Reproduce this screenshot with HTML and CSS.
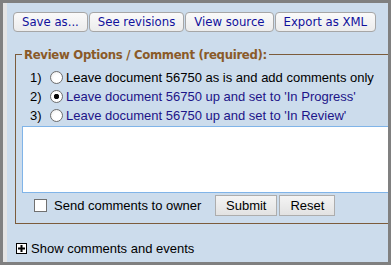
FILE: index.html
```html
<!DOCTYPE html>
<html>
<head>
<meta charset="utf-8">
<link rel="stylesheet" href="styles.css">
</head>
<body>
<div class="frame">
  <div class="panel">
    <div class="toolbar">
      <button class="tbtn">Save as...</button>
      <button class="tbtn">See revisions</button>
      <button class="tbtn">View source</button>
      <button class="tbtn">Export as XML</button>
    </div>
    <fieldset class="review">
      <legend class="legend">Review Options / Comment (required):</legend>
      <div class="options">
        <label class="opt"><span class="num">1)</span><input type="radio" name="st" class="radio"><span class="txt">Leave document 56750 as is and add comments only</span></label>
        <label class="opt blue"><span class="num">2)</span><input type="radio" name="st" class="radio" checked><span class="txt">Leave document 56750 up and set to 'In Progress'</span></label>
        <label class="opt blue"><span class="num">3)</span><input type="radio" name="st" class="radio"><span class="txt">Leave document 56750 up and set to 'In Review'</span></label>
      </div>
      <textarea class="comment"></textarea>
      <div class="actions">
        <label class="send"><input type="checkbox" class="check"><span>Send comments to owner</span></label>
        <button class="abtn">Submit</button>
        <button class="abtn">Reset</button>
      </div>
    </fieldset>
    <div class="show">
      <svg class="plus" width="11" height="11" viewBox="0 0 11 11"><rect x="0.5" y="0.5" width="10" height="10" fill="#fff" stroke="#000"/><rect x="2" y="4.5" width="7" height="2" fill="#000"/><rect x="4.5" y="2" width="2" height="7" fill="#000"/></svg>
      <span>Show comments and events</span>
    </div>
  </div>
</div>
</body>
</html>
```
FILE: styles.css
```css
html, body {
  margin: 0;
  padding: 0;
  overflow: hidden;
}
body {
  width: 391px;
  height: 265px;
  font-family: "Liberation Sans", Arial, sans-serif;
  font-size: 13px;
}
.frame {
  box-sizing: border-box;
  width: 391px;
  height: 265px;
  border: 3px solid #808080;
}
.panel {
  box-sizing: border-box;
  height: 100%;
  border-left: 4px solid #e4e4e4;
  background: #ccdcec;
  padding: 9px 0 0 6px;
  overflow: hidden;
}
.toolbar {
  display: flex;
  gap: 1px;
}
.tbtn {
  height: 20px;
  margin: 0;
  padding: 0 8px;
  font-family: "DejaVu Sans Condensed", "DejaVu Sans", sans-serif;
  font-stretch: condensed;
  font-size: 13px;
  color: #10109c;
  background: linear-gradient(#fafafa, #ececec);
  border: 1px solid #a6a6a6;
  border-radius: 4px;
  line-height: 18px;
}
.review {
  margin: 15px -30px 0 2px;
  padding: 0 0 7px 6px;
  border: 1px solid #7c5c3c;
  border-right: none;
}
.legend {
  font-family: "DejaVu Sans Condensed", "DejaVu Sans", sans-serif;
  font-stretch: condensed;
  font-weight: bold;
  font-size: 13px;
  letter-spacing: -0.3px;
  color: #8a5a28;
  padding: 0 2px;
  margin-left: 0;
  line-height: 15px;
}
.options {
  display: flex;
  flex-direction: column;
  padding: 6px 0 1px 8px;
}
.opt {
  display: flex;
  align-items: center;
  height: 19px;
  color: #000;
}
.opt.blue {
  color: #1c1488;
}
.num {
  color: #000;
  width: 12px;
}
.radio {
  appearance: none;
  -webkit-appearance: none;
  box-sizing: border-box;
  width: 13px;
  height: 13px;
  margin: 0 3px 0 8px;
  border: 1px solid #6e6e6e;
  border-radius: 50%;
  background: radial-gradient(circle at 60% 60%, #ffffff 40%, #e6e6e6 100%);
}
.radio:checked {
  background: radial-gradient(circle, #000 0, #111 2.4px, #fff 3px, #fff 100%);
}
.comment {
  display: block;
  box-sizing: border-box;
  width: 100%;
  height: 67px;
  margin: 0;
  border: 1px solid #80b4e8;
  background: #fff;
  resize: none;
}
.actions {
  display: flex;
  align-items: center;
  gap: 2px;
  padding: 2px 0 0 12px;
  height: 21px;
}
.send {
  display: flex;
  align-items: center;
  width: 179px;
}
.check {
  appearance: none;
  -webkit-appearance: none;
  box-sizing: border-box;
  width: 13px;
  height: 13px;
  margin: 0 7px 0 0;
  border: 1px solid #707070;
  background: #fff;
}
.abtn {
  height: 21px;
  margin: 0;
  padding: 0 10px;
  font-family: "Liberation Sans", Arial, sans-serif;
  font-size: 13px;
  color: #000;
  background: linear-gradient(#f4f4f4, #e2e2e2);
  border: 1px solid #adadad;
  border-radius: 0;
}
.show {
  display: flex;
  align-items: center;
  gap: 4px;
  margin: 17px 0 0 3px;
}
.plus {
  display: block;
}
```
